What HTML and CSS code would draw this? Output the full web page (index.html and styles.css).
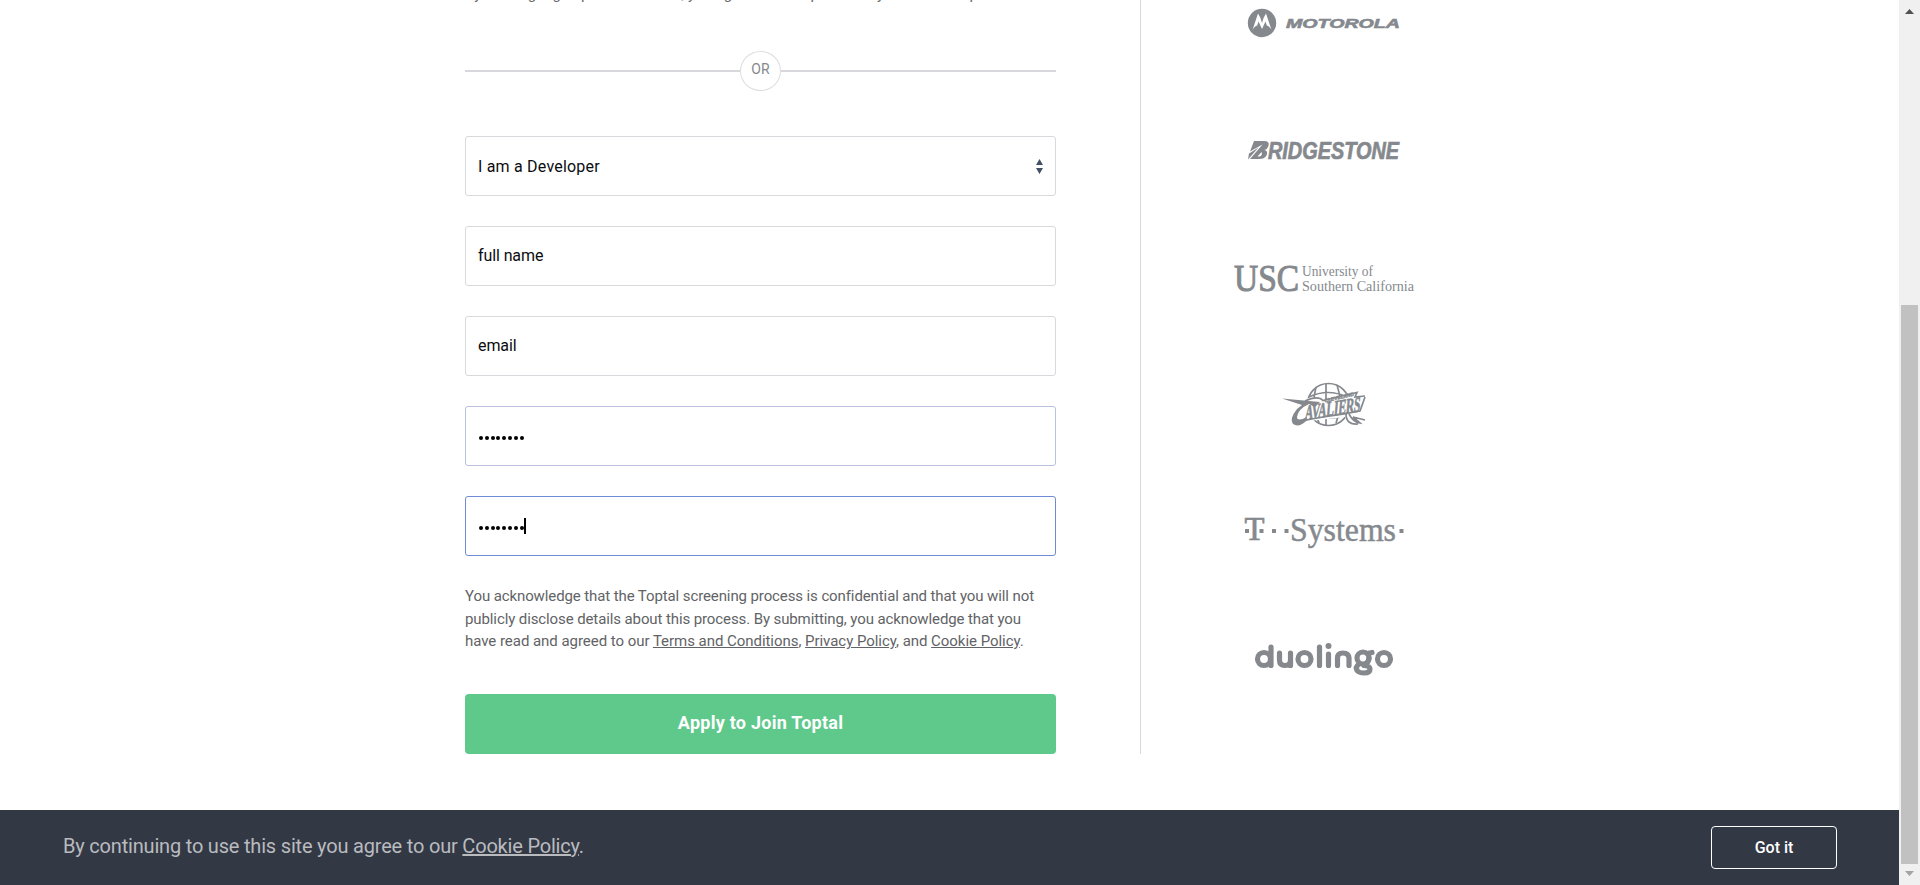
FILE: index.html
```html
<!DOCTYPE html>
<html lang="en">
<head>
<meta charset="utf-8">
<title>Apply to Join Toptal</title>
<link rel="stylesheet" href="styles.css">
</head>
<body>
<div class="screen">
  <div class="page">
    <main class="content">
      <form class="form">
        <p class="consent">By clicking Sign up with LinkedIn, you agree to let Toptal store your LinkedIn profile.</p>
        <div class="divider"><span class="divider-label">OR</span></div>
        <div class="field"><span class="value role">I am a Developer</span>
          <svg class="arrows" width="7" height="15" viewBox="0 0 7 15"><path d="M3.5 0 7 6H0ZM0 9h7l-3.5 6Z"/></svg>
        </div>
        <div class="field"><span class="value typed">full name</span></div>
        <div class="field"><span class="value typed">email</span></div>
        <div class="field visited"><span class="dots"><i></i><i></i><i></i><i></i><i></i><i></i><i></i><i></i></span></div>
        <div class="field focused"><span class="dots"><i></i><i></i><i></i><i></i><i></i><i></i><i></i><i></i></span><span class="caret"></span></div>
        <p class="legal"><span class="line">You acknowledge that the Toptal screening process is confidential and that you will not</span>
          <span class="line">publicly disclose details about this process. By submitting, you acknowledge that you</span>
          <span class="line last">have read and agreed to our <a>Terms and Conditions</a>, <a>Privacy Policy</a>, and <a>Cookie Policy</a>.</span></p>
        <div class="submit"><span>Apply to Join Toptal</span></div>
      </form>
      <aside class="clients">
        <svg class="logos" width="200" height="700" viewBox="1220 0 200 700">
          <g class="ink">
            <circle cx="1262" cy="23" r="14.2"/>
            <path class="paper" d="M1252.500 30 1258 13.500Q1260.500 17 1262 23Q1263.500 17 1266 13.500L1271.500 30Q1269.500 26 1266.800 25.500L1265.500 21.500 1262 29 1258.500 21.500 1257.200 25.500Q1254.500 26 1252.500 30Z"/>
            <text class="motorola" transform="translate(1286 27.700)" textLength="114" lengthAdjust="spacingAndGlyphs">MOTOROLA</text>
            <path fill-rule="evenodd" d="M1254 141H1264Q1270 141 1268.500 146Q1267.500 149 1264.500 150Q1268.500 151 1266.500 155.500Q1264.500 159 1259 159H1250L1262.500 144.500L1250 151.500ZM1261.500 152 1257.500 156.500H1259.500Q1261.500 156 1262 154Z"/>
            <path d="M1249 153.500 1258.500 147.500 1248 159.500Z"/>
            <text class="bridge" x="1268" y="159" textLength="131" lengthAdjust="spacingAndGlyphs">RIDGESTONE</text>
            <text class="usc" x="1234" y="290.500" textLength="65" lengthAdjust="spacingAndGlyphs">USC</text>
            <text class="uni" x="1302" y="276" textLength="71" lengthAdjust="spacingAndGlyphs">University of</text>
            <text class="uni" x="1302" y="291" textLength="112" lengthAdjust="spacingAndGlyphs">Southern California</text>
            <g class="ball">
              <circle cx="1328.500" cy="404.500" r="21"/>
              <path d="M1309 397Q1328 388 1347 397M1326 384V426M1316 387Q1311 404 1319 423M1337 385Q1344 404 1336 423M1310 413Q1330 423 1348 413"/>
            </g>
            <path class="halo" d="M1282 398.500 1301 402Q1314 395 1321 402L1366 391.500 1363 398 1365 399 1359 413 1345 416 1309 420Q1302 428 1296 425Q1290 422 1292 415L1300 407Z"/>
            <path class="halo" d="M1346 414Q1355 410 1365 421L1353 426Q1345 421 1346 414Z"/>
            <path class="outline" d="M1305 401Q1318 395 1323 400.500L1357 392.500 1355 397 1365 396M1303 421Q1309 419 1344 414L1360 411 1365 397"/>
            <text class="cleve" transform="translate(1325 402.500) rotate(-13)" textLength="30" lengthAdjust="spacingAndGlyphs">CLEVELAND</text>
            <text class="cavs" transform="translate(1304.500 420) rotate(-9) skewX(-14)" textLength="56" lengthAdjust="spacingAndGlyphs">AVALIERS</text>
            <path d="M1282 398.500 1320 402 1315 407 1309 404Q1298 409 1297 417Q1297 422 1307 417L1306 421Q1299 428 1293 424Q1289 419 1297 409L1302 405Z"/>
            <path class="outline" d="M1346 414Q1346 425 1358 424M1349 414Q1353 422 1360 423L1353 417 1365 420"/>
            <text class="tee" x="1244.500" y="540" textLength="20" lengthAdjust="spacingAndGlyphs">T</text>
            <path d="M1245 529h4v4h-4zM1259.500 529h4v4h-4zM1272 529h4v4h-4zM1284.500 529h4v4h-4zM1399.500 529h4v4h-4z"/>
            <text class="systems" x="1290" y="541" textLength="106" lengthAdjust="spacingAndGlyphs">Systems</text>
            <g class="duo">
              <circle cx="1264" cy="659" r="6.500"/><path d="M1271 647V665.500M1279.500 653V660Q1279.500 665.500 1285 665.500T1290.500 660V653M1290.500 660V665.500"/>
              <circle cx="1304.500" cy="659" r="6.500"/><path d="M1319.500 647V665.500M1328.500 654V665.500M1337.500 665.500V658Q1337.500 653 1343 653T1349 658V665.500"/>
              <circle cx="1363" cy="658" r="6"/><path d="M1367 653.500 1372 652.500M1369 658Q1369 661 1366 664M1359 664Q1355 667 1357 670.500Q1359 673 1364 673Q1370 673 1370 669Q1370 666 1364 665.500"/>
              <circle cx="1384" cy="659" r="6.500"/>
            </g>
            <circle cx="1328.500" cy="646" r="3"/>
          </g>
        </svg>
      </aside>
    </main>
    <footer class="banner">
      <p class="notice">By continuing to use this site you agree to our <a>Cookie Policy</a>.</p>
      <div class="accept">Got it</div>
    </footer>
  </div>
  <div class="scrollbar">
    <svg width="9" height="5" viewBox="0 0 9 5"><path fill="#505050" d="M4.500 0 9 5H0Z"/></svg>
    <div class="thumb"></div>
    <svg width="9" height="5" viewBox="0 0 9 5"><path fill="#a3a3a3" d="M0 0h9L4.500 5Z"/></svg>
  </div>
</div>
</body>
</html>
```
FILE: styles.css
```css
* { box-sizing: border-box; }
body { margin: 0; background: #fff; font-family: Roboto, "Noto Sans", sans-serif; overflow: hidden; }
p { margin: 0; }
a { text-decoration: underline; }
.screen { display: flex; height: 885px; }
.page { flex: 1; display: flex; flex-direction: column; }
.content { display: flex; height: 810px; padding-left: 465px; }
.form { width: 676px; height: 754px; padding-right: 84px; border-right: 1px solid #d8d9dc; display: flex; flex-direction: column; }
.form > * { flex: none; }
.consent { height: 66px; margin-top: -15px; font-size: 15px; line-height: 18px; color: #666769; white-space: nowrap; }
.divider { height: 42px; width: 591px; display: flex; align-items: flex-start; background: linear-gradient(#d8d8dc, #d8d8dc) 0 19px / 100% 2px no-repeat; justify-content: center; margin-bottom: 43px; }
.divider-label { width: 41px; height: 40px; border: 1px solid #dddde0; border-radius: 50%; background: #fff; text-align: center; font-size: 14px; line-height: 35px; color: #84888e; }
.field { width: 591px; height: 60px; margin-bottom: 30px; border: 1px solid #d8d9dc; border-radius: 3px; display: flex; align-items: center; padding: 0 12px; font-size: 16px; color: #0b0c10; }
.value { flex: 1; }
.role { letter-spacing: 0.200px; }
.typed { letter-spacing: -0.100px; padding-bottom: 1px; }
.arrows { fill: #455065; }
.visited { border-color: #b9c1dc; }
.focused { border-color: #6f8bd5; }
.dots { display: flex; gap: 1.800px; padding-top: 3px; padding-left: 1px; }
.dots i { width: 4px; height: 4px; border-radius: 50%; background: #000; }
.caret { width: 2px; height: 16px; background: #000; }
.legal { width: 591px; height: 68px; margin-top: -1px; font-size: 15px; line-height: 22.600px; color: #626366; }
.line { display: block; white-space: nowrap; letter-spacing: -0.105px; }
.last { letter-spacing: -0.040px; }
.submit { width: 591px; height: 60px; margin-top: 41px; border-radius: 4px; background: #5ec98b; color: #fff; text-align: center; font-size: 18px; font-weight: 700; line-height: 57px; letter-spacing: 0.250px; }
.clients { padding-left: 79px; }
.logos { display: block; }
.ink { fill: #85898e; }
.paper { fill: #fff; }
.motorola { font: bold italic 13.500px "Liberation Sans", sans-serif; stroke: #85898e; stroke-width: 0.600px; }
.bridge { font: italic bold 23px "Liberation Sans", sans-serif; stroke: #85898e; stroke-width: 0.700px; }
.usc { font: 37px "Liberation Serif", serif; stroke: #85898e; stroke-width: 1px; }
.uni { font: 15px "Liberation Serif", serif; }
.ball, .outline { fill: none; stroke: #85898e; stroke-width: 1.700px; }
.halo { fill: #fff; stroke: #fff; stroke-width: 2px; }
.cleve { font: bold italic 5px "Liberation Sans", sans-serif; stroke: #85898e; stroke-width: 0.400px; }
.cavs { font: bold 21px "Liberation Serif", serif; stroke: #85898e; stroke-width: 0.700px; }
.tee { font: 34px "Liberation Serif", serif; stroke: #85898e; stroke-width: 0.700px; }
.systems { font: 34px "Liberation Serif", serif; stroke: #85898e; stroke-width: 0.500px; }
.duo { fill: none; stroke: #85898e; stroke-width: 5.200px; stroke-linecap: round; }
.banner { height: 75px; background: #333845; display: flex; align-items: center; justify-content: space-between; padding: 0 62px 0 63px; }
.notice { font-size: 20px; color: #b9bbbf; line-height: 24px; margin-bottom: 3px; letter-spacing: -0.190px; }
.accept { width: 126px; height: 43px; border: 1px solid #fff; border-radius: 4px; color: #fff; font-size: 16px; font-weight: 500; text-align: center; line-height: 42px; }
.scrollbar { width: 21px; background: #f0f0f0; display: flex; flex-direction: column; align-items: center; padding-top: 9px; }
.thumb { width: 17px; height: 559px; margin: 291px 0 16px; background: #c1c1c1; flex: none; }
.thumb + svg { margin-top: -9px; }
```
